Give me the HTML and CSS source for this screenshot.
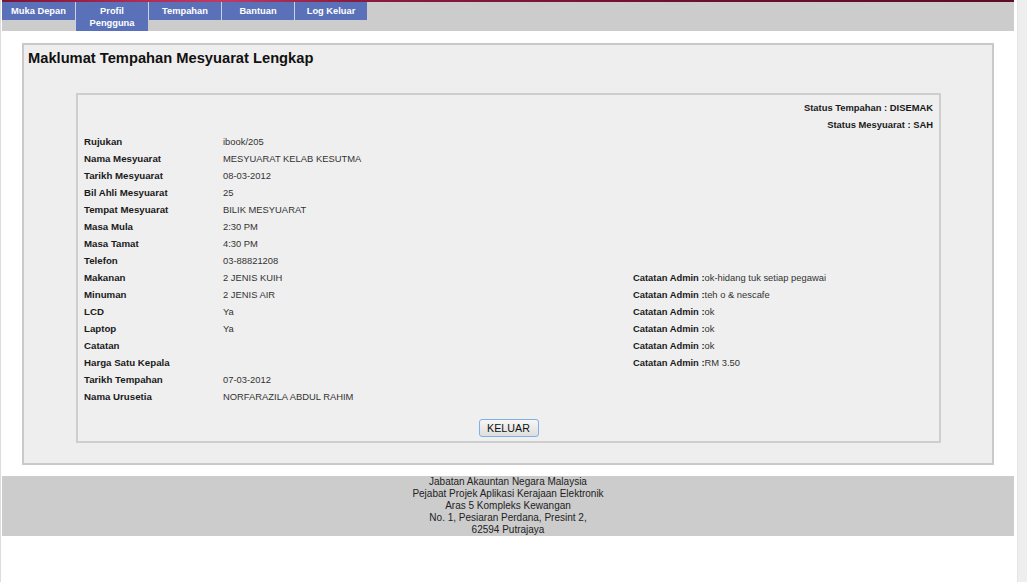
FILE: index.html
```html
<!DOCTYPE html>
<html>
<head>
<meta charset="utf-8">
<title>Maklumat Tempahan Mesyuarat Lengkap</title>
<link rel="stylesheet" href="styles.css">
</head>
<body>
<div class="screen">
  <div class="page">
    <div class="topstrip"></div>
    <nav class="navbar">
      <a class="tab">Muka Depan</a>
      <a class="tab tall">Profil<br>Pengguna</a>
      <a class="tab">Tempahan</a>
      <a class="tab">Bantuan</a>
      <a class="tab">Log Keluar</a>
    </nav>

    <div class="panel">
      <h1 class="title">Maklumat Tempahan Mesyuarat Lengkap</h1>
      <div class="inner">
        <div class="status">Status Tempahan : DISEMAK</div>
        <div class="status">Status Mesyuarat : SAH</div>
        <div class="grid">
          <div class="lbl">Rujukan</div><div class="val">ibook/205</div><div class="adm"></div>
          <div class="lbl">Nama Mesyuarat</div><div class="val">MESYUARAT KELAB KESUTMA</div><div class="adm"></div>
          <div class="lbl">Tarikh Mesyuarat</div><div class="val">08-03-2012</div><div class="adm"></div>
          <div class="lbl">Bil Ahli Mesyuarat</div><div class="val">25</div><div class="adm"></div>
          <div class="lbl">Tempat Mesyuarat</div><div class="val">BILIK MESYUARAT</div><div class="adm"></div>
          <div class="lbl">Masa Mula</div><div class="val">2:30 PM</div><div class="adm"></div>
          <div class="lbl">Masa Tamat</div><div class="val">4:30 PM</div><div class="adm"></div>
          <div class="lbl">Telefon</div><div class="val">03-88821208</div><div class="adm"></div>
          <div class="lbl">Makanan</div><div class="val">2 JENIS KUIH</div><div class="adm"><b>Catatan Admin :</b>ok-hidang tuk setiap pegawai</div>
          <div class="lbl">Minuman</div><div class="val">2 JENIS AIR</div><div class="adm"><b>Catatan Admin :</b>teh o &amp; nescafe</div>
          <div class="lbl">LCD</div><div class="val">Ya</div><div class="adm"><b>Catatan Admin :</b>ok</div>
          <div class="lbl">Laptop</div><div class="val">Ya</div><div class="adm"><b>Catatan Admin :</b>ok</div>
          <div class="lbl">Catatan</div><div class="val"></div><div class="adm"><b>Catatan Admin :</b>ok</div>
          <div class="lbl">Harga Satu Kepala</div><div class="val"></div><div class="adm"><b>Catatan Admin :</b>RM 3.50</div>
          <div class="lbl">Tarikh Tempahan</div><div class="val">07-03-2012</div><div class="adm"></div>
          <div class="lbl">Nama Urusetia</div><div class="val">NORFARAZILA ABDUL RAHIM</div><div class="adm"></div>
        </div>
        <div class="actions"><button class="btn" type="button">KELUAR</button></div>
      </div>
    </div>

    <footer class="footer">
      Jabatan Akauntan Negara Malaysia<br>
      Pejabat Projek Aplikasi Kerajaan Elektronik<br>
      Aras 5 Kompleks Kewangan<br>
      No. 1, Pesiaran Perdana, Presint 2,<br>
      62594 Putrajaya
    </footer>
  </div>
  <div class="rightbar"></div>
</div>
</body>
</html>
```

FILE: styles.css
```css
html, body {
  margin: 0;
  padding: 0;
  background: #ffffff;
}

body {
  font-family: "Liberation Sans", Arial, sans-serif;
  color: #222;
}

.screen {
  display: flex;
  height: 582px;
  border-left: 1px solid #dcdcdc;
  box-sizing: border-box;
  overflow: hidden;
}

.page {
  width: 1012px;
  margin-left: 1px;
  flex: none;
}

.rightbar {
  width: 10px;
  margin-left: 3px;
  background: #eeeeee;
  border-left: 1px solid #e4e4e4;
  flex: none;
}

.topstrip {
  height: 2px;
  background: linear-gradient(90deg, #7a1434 0%, #b52a52 14%, #c23a62 22%, #8c1c3f 34%, #6c0f2e 70%, #5e0c27 100%);
}

.navbar {
  display: flex;
  align-items: flex-start;
  height: 29px;
  background: #cccccc;
}

.tab {
  box-sizing: border-box;
  width: 73px;
  height: 18px;
  padding-top: 3px;
  background: #5a71b9;
  color: #ffffff;
  font-family: "Liberation Sans", Arial, sans-serif;
  font-weight: bold;
  font-size: 9.3px;
  line-height: 12px;
  text-align: center;
  border-left: 1px solid #c9d0ea;
}

.tab:first-child {
  border-left: none;
}

.tab.tall {
  height: 29px;
}

.panel {
  box-sizing: border-box;
  width: 972px;
  margin: 12px 0 0 20px;
  padding: 4px 0 20px 0;
  background: #eeeeee;
  border: 2px solid #c9c9c9;
}

.title {
  margin: 0 0 26px 0;
  padding-left: 4px;
  font-size: 14.7px;
  line-height: 18px;
  font-weight: bold;
  color: #111;
}

.inner {
  box-sizing: border-box;
  width: 865px;
  margin-left: 52px;
  padding: 4px 6px;
  background: #efefef;
  border: 2px solid #cecece;
}

.status {
  text-align: right;
  font-weight: bold;
  font-size: 9.4px;
  line-height: 17px;
  color: #1a1a1a;
}

.grid {
  display: grid;
  grid-template-columns: 139px 410px 1fr;
  grid-auto-rows: 17px;
  line-height: 17px;
}

.lbl {
  font-weight: bold;
  font-size: 9.7px;
  color: #1a1a1a;
}

.val {
  font-size: 9.4px;
  color: #333;
}

.adm {
  font-size: 9.4px;
  color: #333;
}

.adm b {
  color: #1a1a1a;
}

.actions {
  display: flex;
  justify-content: center;
  margin-top: 14px;
}

.btn {
  box-sizing: border-box;
  width: 60px;
  height: 18px;
  padding: 0;
  font-family: "Liberation Sans", Arial, sans-serif;
  font-size: 10.7px;
  color: #111;
  background: linear-gradient(#f6f6f6, #dedede);
  border: 1px solid #7fb0e2;
  border-radius: 3px;
}

.footer {
  margin-top: 11px;
  height: 60px;
  background: #cccccc;
  text-align: center;
  font-size: 10px;
  line-height: 12px;
  color: #222;
}
```
